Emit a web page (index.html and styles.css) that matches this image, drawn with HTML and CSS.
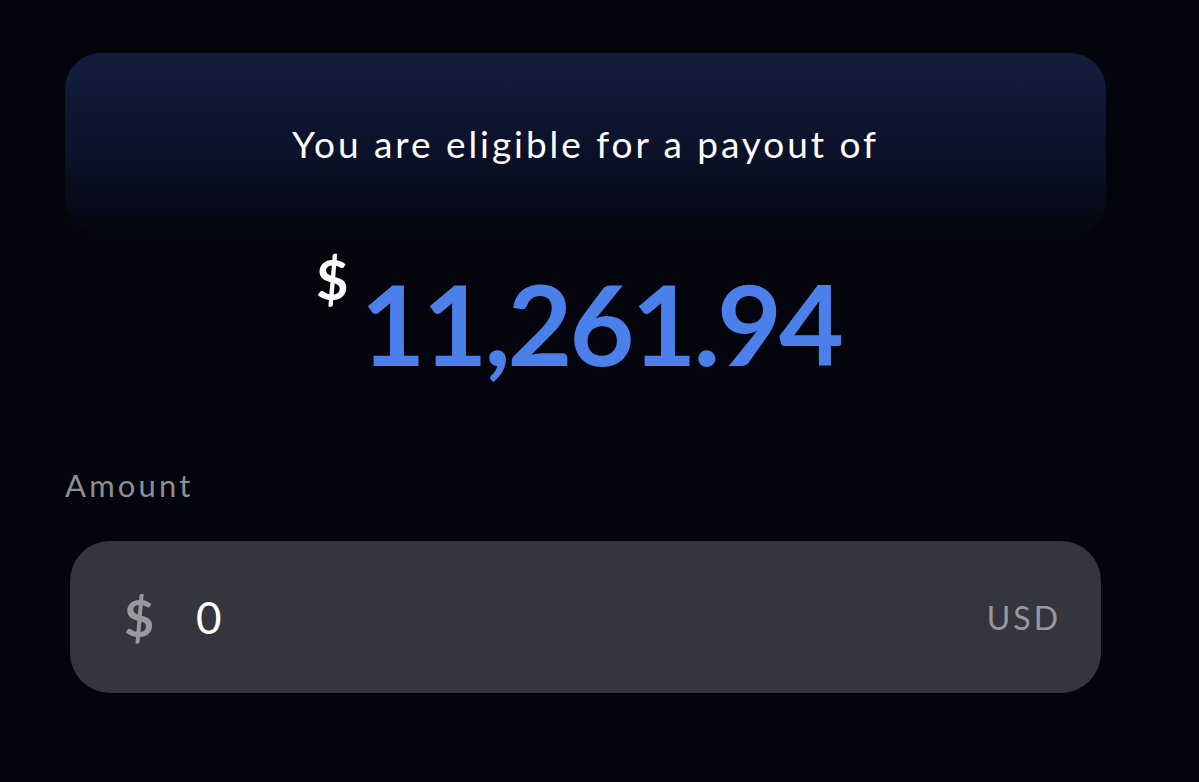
FILE: index.html
```html
<!DOCTYPE html>
<html>
<head>
<meta charset="utf-8">
<link rel="stylesheet" href="styles.css">
</head>
<body>
<div class="page">
  <div class="banner">
    <p class="banner-text">You are eligible for a payout of</p>
  </div>
  <div class="payout">
    <span class="payout-currency">$</span>
    <span class="payout-value">11,261.94</span>
  </div>
  <div class="field">
    <div class="field-label">Amount</div>
    <div class="field-input">
      <span class="field-prefix">$</span>
      <span class="field-value">0</span>
      <span class="field-suffix">USD</span>
    </div>
  </div>
</div>
</body>
</html>
```

FILE: styles.css
```css
html, body {
  margin: 0;
  padding: 0;
  background: #03040c;
  width: 1199px;
  height: 782px;
  overflow: hidden;
}
.page {
  padding: 53px 93px 0 65px;
  font-family: "Lato", "Open Sans", sans-serif;
}
.banner {
  height: 182px;
  border-radius: 36px;
  background: linear-gradient(180deg, #141e3b 0%, #0e1530 40%, #04060f 100%);
  display: flex;
  justify-content: center;
  padding-top: 69px;
  box-sizing: border-box;
}
.banner-text {
  margin: 0;
  color: #ffffff;
  font-size: 37px;
  font-weight: 400;
  letter-spacing: 2.95px;
  line-height: 44px;
}
.payout {
  display: flex;
  justify-content: center;
  align-items: flex-start;
  margin-top: 20px;
  height: 250px;
  padding-right: 14px;
}
.payout-currency {
  color: #ffffff;
  font-weight: 700;
  font-size: 56px;
  line-height: 56px;
  margin-right: 12px;
  margin-top: -4px;
}
.payout-value {
  color: #4b80ea;
  font-weight: 700;
  font-size: 112px;
  line-height: 120px;
  margin-top: 8px;
  letter-spacing: -3px;
}
.field-label {
  color: #8e8e94;
  font-size: 31px;
  line-height: 36px;
  letter-spacing: 3.2px;
  margin-top: -38px;
}
.field-input {
  margin: 38px 5px 0 5px;
  height: 152px;
  border-radius: 40px;
  background: #35353d;
  display: flex;
  align-items: center;
  padding: 0 40px 0 54px;
}
.field-prefix {
  color: #98989e;
  font-size: 52px;
  font-weight: 700;
  width: 72px;
}
.field-value {
  color: #ffffff;
  font-size: 44px;
  flex: 1;
}
.field-suffix {
  color: #98989e;
  font-size: 32px;
  letter-spacing: 3px;
}
```
